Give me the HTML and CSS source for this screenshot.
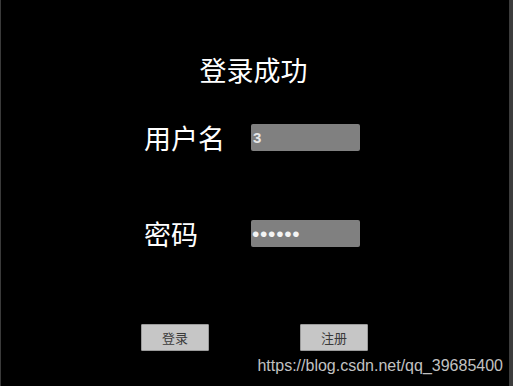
FILE: index.html
```html
<!DOCTYPE html>
<html lang="zh-CN">
<head>
<meta charset="utf-8">
<title>登录成功</title>
<link rel="stylesheet" href="styles.css">
</head>
<body>
<div class="page">
  <h1 class="title">登录成功</h1>
  <form class="form">
    <div class="row">
      <label class="label" for="user">用户名</label>
      <input class="field field-text" id="user" type="text" value="3">
    </div>
    <div class="row">
      <label class="label" for="pass">密码</label>
      <input class="field field-pass" id="pass" type="password" value="123456">
    </div>
    <div class="actions">
      <button class="btn" type="button">登录</button>
      <button class="btn" type="button">注册</button>
    </div>
  </form>
  <div class="watermark">https://blog.csdn.net/qq_39685400</div>
</div>
</body>
</html>
```

FILE: styles.css
```css
html, body {
  margin: 0;
  padding: 0;
  background: #000;
}

.page {
  box-sizing: border-box;
  width: 513px;
  height: 386px;
  overflow: hidden;
  background: #000;
  border-left: 1px solid #3a3a3a;
  border-right: 4px solid #3c3c3c;
  padding-top: 56px;
  font-family: "Noto Sans CJK SC", "Liberation Sans", sans-serif;
  color: #fff;
}

.title {
  margin: 0;
  padding-right: 3px;
  text-align: center;
  font-size: 27px;
  line-height: 27px;
  font-weight: 400;
  color: #fff;
}

.form {
  margin: 41px 0 0 0;
  display: flex;
  flex-direction: column;
}

.row {
  display: flex;
  align-items: flex-start;
  height: 27px;
  padding-left: 143px;
  margin-bottom: 69px;
}

.row + .row {
  margin-bottom: 77px;
}

.label {
  width: 107px;
  font-size: 27px;
  line-height: 27px;
  color: #fff;
}

.field {
  box-sizing: border-box;
  width: 109px;
  height: 27px;
  margin: 0;
  padding: 0 0 0 2px;
  border: none;
  border-radius: 2px;
  background: #808080;
  outline: none;
  font-family: "Liberation Sans", "DejaVu Sans", sans-serif;
  color: #e6e6e6;
}

.field-text {
  font-size: 15px;
  font-weight: 700;
}

.field-pass {
  font-size: 21px;
  letter-spacing: 0.7px;
  color: #f4f4f4;
  padding-left: 1px;
}

.actions {
  display: flex;
  padding-left: 140px;
  gap: 91px;
}

.btn {
  box-sizing: border-box;
  width: 68px;
  height: 27px;
  margin: 0;
  padding: 0;
  border: 1px solid #9a9a9a;
  border-radius: 1px;
  background: #c6c6c6;
  color: #3a3a3a;
  font-family: "Noto Sans CJK SC", "Liberation Sans", sans-serif;
  font-size: 13px;
  line-height: 25px;
}

.watermark {
  margin-top: 6px;
  padding-right: 6px;
  text-align: right;
  font-family: "Liberation Sans", Arial, sans-serif;
  font-size: 16px;
  line-height: 18px;
  color: #c2c2c2;
}
```
